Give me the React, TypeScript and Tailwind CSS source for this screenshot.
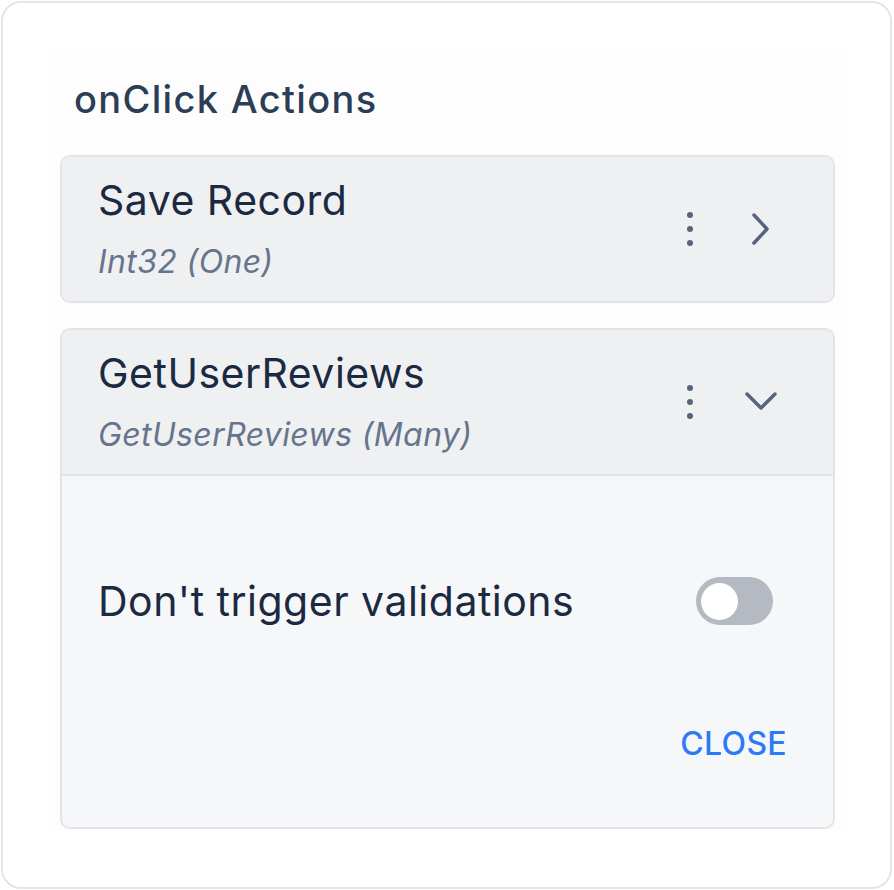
const font = { fontFamily: "Inter, 'Noto Sans', sans-serif" };

function Kebab() {
  return (
    <svg width="24" height="40" viewBox="0 0 24 40" className="text-[#56657b]">
      <circle cx="12" cy="6" r="3" fill="currentColor" />
      <circle cx="12" cy="20" r="3" fill="currentColor" />
      <circle cx="12" cy="34" r="3" fill="currentColor" />
    </svg>
  );
}

function Chevron({ open }: { open: boolean }) {
  return (
    <svg width="32" height="32" viewBox="0 0 32 32" className="text-[#56657b]" fill="none">
      {open ? (
        <path d="M2 8 L16 22 L30 8" stroke="currentColor" strokeWidth="3.5" strokeLinecap="round" strokeLinejoin="round" />
      ) : (
        <path d="M9 2 L22 16 L9 30" stroke="currentColor" strokeWidth="3.5" strokeLinecap="round" strokeLinejoin="round" />
      )}
    </svg>
  );
}

function ActionHeader({ title, sub, open }: { title: string; sub: string; open: boolean }) {
  return (
    <div className="flex h-[144px] items-center bg-[#eff0f2] pl-[36px] pr-[56px]">
      <div className="flex flex-1 flex-col">
        <span className="text-[41px] leading-[48px] tracking-[0.012em] text-[#1b2a41]">{title}</span>
        <span className="mt-[18px] text-[32px] italic leading-[40px] tracking-[0.012em] text-[#66758b]">{sub}</span>
      </div>
      <div className="flex items-center gap-[43px]">
        <Kebab />
        <Chevron open={open} />
      </div>
    </div>
  );
}

export default function App() {
  return (
    <div className="h-[890px] w-[894px] bg-white p-px" style={font}>
      <div className="h-[888px] w-[891px] rounded-[20px] border-2 border-[#e3e5e9] pl-[46px] pt-[44px]">
        <div className="h-[784px] w-[798px] bg-[#fdfdfe] pl-[11px] pr-[12px]">
          <h2 className="pl-[14px] pt-[30px] text-[38px] font-medium leading-[44px] tracking-[0.035em] text-[#2c3e55]">
            onClick Actions
          </h2>
          <div className="mt-[34px] flex flex-col gap-[25px]">
            <div className="overflow-hidden rounded-[10px] border-2 border-[#e2e4e8]">
              <ActionHeader title="Save Record" sub="Int32 (One)" open={false} />
            </div>
            <div className="overflow-hidden rounded-[10px] border-2 border-[#e2e4e8]">
              <ActionHeader title="GetUserReviews" sub="GetUserReviews (Many)" open={true} />
              <div className="border-t-2 border-[#e2e4e8] bg-[#f6f7f9] pb-[63px] pt-[101px]">
                <div className="flex items-center justify-between pl-[36px] pr-[60px]">
                  <span className="text-[41px] leading-[48px] tracking-[0.012em] text-[#1b2a41]">Don't trigger validations</span>
                  <button className="flex h-[48px] w-[77px] items-center rounded-full bg-[#b4b9c2] px-[5px]">
                    <span className="h-[37px] w-[37px] rounded-full bg-white" />
                  </button>
                </div>
                <div className="mt-[99px] flex justify-end pr-[46px]">
                  <span className="text-[32px] font-medium leading-[40px] tracking-[0.01em] text-[#2b7bf6]">CLOSE</span>
                </div>
              </div>
            </div>
          </div>
        </div>
      </div>
    </div>
  );
}
